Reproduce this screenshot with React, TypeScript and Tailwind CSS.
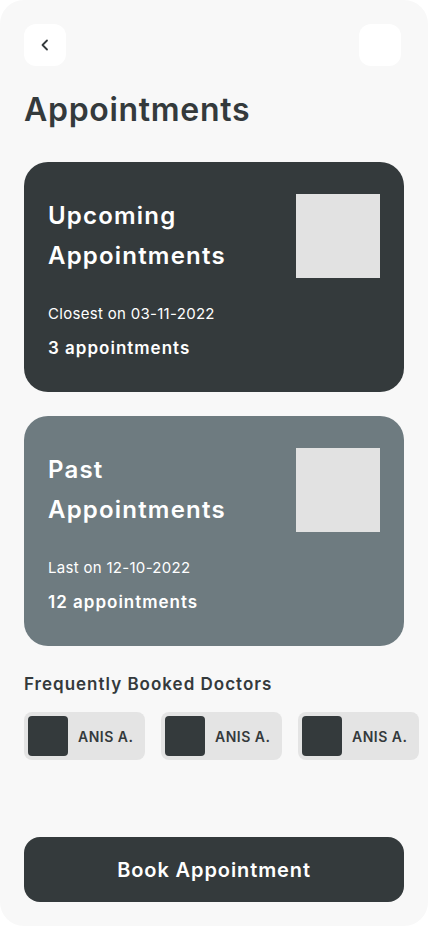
import React from 'react';

const font = { fontFamily: 'Inter, "Noto Sans", sans-serif' };

interface CardProps {
  title: string[];
  subtitle: string;
  count: string;
  dark?: boolean;
}

const AppointmentCard: React.FC<CardProps> = ({ title, subtitle, count, dark }) => (
  <div
    className={`flex justify-between rounded-3xl pl-6 pr-6 pt-8 pb-8 h-[230px] ${
      dark ? 'bg-[#343a3c]' : 'bg-[#6e7b80]'
    }`}
  >
    <div className="flex flex-col text-white">
      <div className="mt-0.5 text-[24px] leading-[40px] font-semibold tracking-[1.2px]">
        {title.map((t) => (
          <div key={t}>{t}</div>
        ))}
      </div>
      <p className="mt-[27px] text-[15px] leading-[22px] tracking-[0.3px]">{subtitle}</p>
      <p className="mt-[11px] text-[17px] leading-[24px] font-semibold tracking-[1px]">{count}</p>
    </div>
    <div className="w-[84px] h-[84px] bg-[#e2e2e2] shrink-0" />
  </div>
);

const DoctorChip: React.FC<{ name: string }> = ({ name }) => (
  <div className="flex items-center gap-[10px] shrink-0 w-[121px] h-12 rounded-lg bg-[#e4e4e4] p-1">
    <div className="w-10 h-10 rounded bg-[#343a3c] shrink-0" />
    <span className="text-[14px] font-semibold tracking-[0.5px] text-[#343a3c]">{name}</span>
  </div>
);

export default function App() {
  return (
    <div className="bg-white min-h-[926px]" style={font}>
      <div className="h-[926px] rounded-3xl bg-[#f8f8f8] overflow-hidden flex flex-col px-6 pt-6 pb-6">
        {/* header */}
        <div className="flex justify-between pr-[3px]">
          <button className="w-[42px] h-[42px] rounded-xl bg-white flex items-center justify-center text-[#343a3c]">
            <svg width="16" height="16" viewBox="0 0 16 16" fill="none">
              <path d="M10 3.5 5.5 8l4.5 4.5" stroke="currentColor" strokeWidth="1.8" strokeLinecap="round" strokeLinejoin="round" />
            </svg>
          </button>
          <div className="w-[42px] h-[42px] rounded-xl bg-white" />
        </div>

        <h1 className="mt-6 text-[32px] leading-[40px] font-semibold tracking-[0.7px] text-[#343a3c]">Appointments</h1>

        <div className="mt-8 flex flex-col gap-6">
          <AppointmentCard
            dark
            title={['Upcoming', 'Appointments']}
            subtitle="Closest on 03-11-2022"
            count="3 appointments"
          />
          <AppointmentCard
            title={['Past', 'Appointments']}
            subtitle="Last on 12-10-2022"
            count="12 appointments"
          />
        </div>

        <h2 className="mt-[26px] text-[17px] leading-[24px] font-semibold tracking-[1px] text-[#343a3c]">
          Frequently Booked Doctors
        </h2>
        <div className="mt-4 flex gap-4">
          <DoctorChip name="ANIS A." />
          <DoctorChip name="ANIS A." />
          <DoctorChip name="ANIS A." />
        </div>

        <button className="mt-auto h-[65px] rounded-2xl bg-[#343a3c] text-white text-[20px] font-semibold tracking-[0.9px]">
          Book Appointment
        </button>
      </div>
    </div>
  );
}
